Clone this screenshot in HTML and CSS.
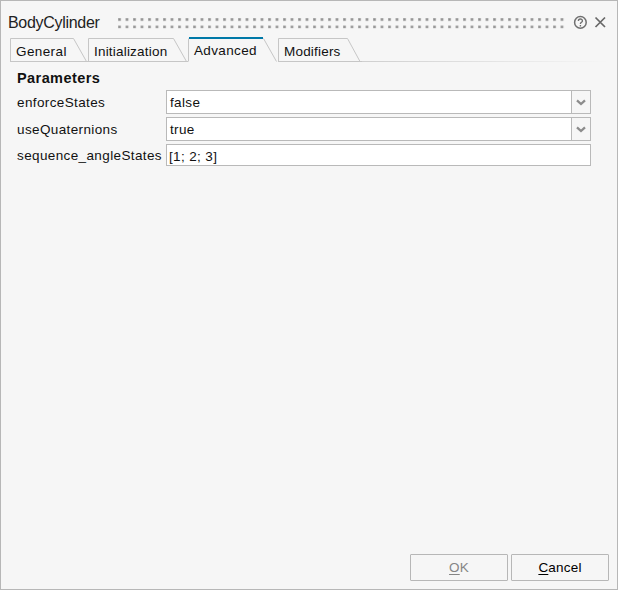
FILE: index.html
```html
<!DOCTYPE html>
<html lang="en">
<head>
<meta charset="utf-8">
<title>BodyCylinder</title>
<link rel="stylesheet" href="styles.css">
</head>
<body>
<main class="dialog">
  <header class="titlebar">
    <h1 class="title">BodyCylinder</h1>
    <svg class="grip" width="448" height="11">
      <defs>
        <pattern id="dots" width="7.5" height="7.5" patternUnits="userSpaceOnUse">
          <rect width="3" height="3" fill="#bcbcbc"/>
          <rect x=".5" y=".5" width="2" height="2" fill="#8c8c8c"/>
        </pattern>
      </defs>
      <rect width="448" height="10.5" fill="url(#dots)"/>
    </svg>
    <svg class="help" width="14" height="14" fill="none" stroke="#707070">
      <circle cx="7.4" cy="7.4" r="5.8" stroke-width="1.5"/>
      <path d="M5.4 6.1C5.4 3.4 9.4 3.4 9.4 5.9C9.4 7.4 7.4 7.2 7.4 9M7.4 10V11.4" stroke-width="1.4"/>
    </svg>
    <svg class="close" width="12" height="12" fill="none" stroke="#686868" stroke-width="1.7">
      <path d="M1.5 1.5L11 11M11 1.5L1.5 11"/>
    </svg>
  </header>
  <nav class="tabs">
    <a class="tab general"><svg width="78" height="25"><path d="M.5 24.5V1.5H63.5L76.5 24.5"/></svg><span>General</span></a>
    <a class="tab init"><svg width="100" height="25"><path d="M.5 24.5V1.5H85.5L98.5 24.5"/></svg><span>Initialization</span></a>
    <a class="tab advanced"><svg width="90" height="25"><path d="M.5 24.5V1.5M75.5 1.5L88.5 24.5"/><path class="accent" d="M1 1H75"/></svg><span>Advanced</span></a>
    <a class="tab modifiers"><svg width="84" height="25"><path d="M.5 24.5V1.5H69.5L82 24.5"/></svg><span>Modifiers</span></a>
    <i class="tail"></i>
  </nav>
  <section class="params">
    <h2>Parameters</h2>
    <div class="row"><label class="enforce">enforceStates</label><div class="field"><span>false</span><button class="drop"><svg width="10" height="7"><path d="M1 1.3L5 5L9 1.3"/></svg></button></div></div>
    <div class="row"><label class="quat">useQuaternions</label><div class="field"><span>true</span><button class="drop"><svg width="10" height="7"><path d="M1 1.3L5 5L9 1.3"/></svg></button></div></div>
    <div class="row last"><label class="seq">sequence_angleStates</label><div class="field plain"><span>[1; 2; 3]</span></div></div>
  </section>
  <footer class="actions">
    <button class="btn disabled"><span><u>O</u>K</span></button>
    <button class="btn"><span><u>C</u>ancel</span></button>
  </footer>
</main>
</body>
</html>
```
FILE: styles.css
```css
* { box-sizing: border-box; }
body { margin: 0; font: 13.5px/16px "Liberation Sans", Arial, sans-serif; color: #111; }
svg { display: block; flex: none; }
button { font: inherit; margin: 0; padding: 0; }
.dialog { width: 618px; height: 590px; background: #f6f6f6; border: 1px solid #b7b7b7; display: flex; flex-direction: column; }
.titlebar { display: flex; height: 36px; padding-left: 7px; flex: none; }
.title { font-size: 16px; line-height: 20px; font-weight: 400; letter-spacing: -.3px; margin: 12px 0 0; width: 110px; color: #222; }
.grip { margin-top: 17px; }
.help { margin: 14px 0 0 7px; }
.close { margin: 15px 0 0 7px; }
.tabs { display: flex; height: 25px; padding-left: 9px; flex: none; }
.tab { display: grid; height: 25px; border-bottom: 1px solid #c6c6c6; }
.tab svg, .tab span { grid-area: 1 / 1; }
.tab path { fill: none; stroke: #c6c6c6; }
.tab .accent { stroke: #0079a8; stroke-width: 2; }
.tab span { padding: 7px 0 0 6px; letter-spacing: .2px; white-space: nowrap; }
.tab.advanced { border-color: transparent; }
.tab.advanced span { padding-top: 6px; letter-spacing: .35px; }
.tab.general span { letter-spacing: .4px; }
.tail { width: 245px; border-bottom: 1px solid; border-image: linear-gradient(90deg, #cfcfcf, #f6f6f6) 1; }
.params { padding: 8px 26px 0 16px; }
h2 { font-size: 14.5px; line-height: 16px; font-weight: 700; letter-spacing: .42px; margin: 0 0 4px; }
.row { display: grid; grid-template-columns: 149px 425px; grid-template-rows: 100%; height: 24px; margin-bottom: 3px; }
.row label { line-height: 26px; letter-spacing: .38px; white-space: nowrap; }
.field { display: flex; border: 1px solid #b9b9b9; background: #fff; }
.field span { flex: 1; padding: 4px 0 0 3px; letter-spacing: .36px; }
.field.plain span { padding: 4px 0 0 2px; }
.drop { width: 19px; border: 0; border-left: 1px solid #b9b9b9; background: #f6f6f6; display: flex; align-items: center; justify-content: center; }
.drop path { fill: none; stroke: #8c8c8c; stroke-width: 2.3; }
.row.last { height: 22px; margin: 0; }
.row.last label { line-height: 24px; }
.actions { display: flex; gap: 3px; margin: auto 8px 8px auto; }
.btn { width: 98px; height: 27px; border: 1px solid #b7b7b7; border-radius: 1px; background: #f6f6f6; color: #000; letter-spacing: .2px; }
.btn.disabled { color: #858585; }
.btn u { text-underline-offset: 2px; }
```
